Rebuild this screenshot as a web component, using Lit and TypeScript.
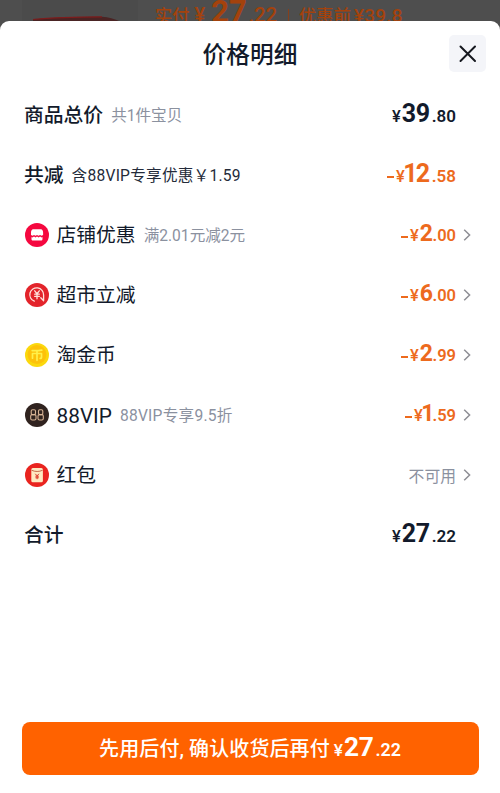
import {css, html, LitElement, nothing, svg, TemplateResult} from 'lit';
import {customElement, property} from 'lit/decorators.js';
import {classMap} from 'lit/directives/class-map.js';

interface Discount {
  icon: string;
  label: string;
  hint?: string;
  price?: string;
  status?: string;
}

const DISCOUNTS: Discount[] = [
  {icon: 'shop', label: '店铺优惠', hint: '满2.01元减2元', price: '2.00'},
  {icon: 'market', label: '超市立减', price: '6.00'},
  {icon: 'coin', label: '淘金币', price: '2.99'},
  {icon: 'vip', label: '88VIP', hint: '88VIP专享9.5折', price: '1.59'},
  {icon: 'packet', label: '红包', status: '不可用'},
];

const ICONS: Record<string, TemplateResult> = {
  shop: svg`
    <circle cx="12" cy="12" r="12" fill="#f5083f"/>
    <path d="M8 6.300h8c1.200 0 2.100 1.500 2.100 3.300v2.300l-1.500.8-1.500-.8-1.600.8-1.500-.8-1.500.8-1.500-.8-1.500.8-1.500-.8V9.600c0-1.800.9-3.300 2.100-3.300z" fill="#fff"/>
    <path d="M6.500 14.100l1 .3 1.500-.8 1.500.8 1.500-.8 1.600.8 1.500-.8 1.500.8.9-.3v1.800c0 1-.6 1.600-1.600 1.600H8.100c-1 0-1.600-.6-1.600-1.600z" fill="#fff"/>`,
  market: svg`
    <circle cx="12" cy="12" r="12" fill="#e3242b"/>
    <path d="M9.300 18.200A6.900 6.900 0 1 1 18.600 12v5.500M15.800 14.800l2.800 3" fill="none" stroke="#ffe3dc" stroke-width="1.300" stroke-linecap="round" stroke-linejoin="round"/>
    <path d="M9.700 7.800l2.300 2.900 2.300-2.900M12 10.800v5M9.700 11.200h4.600M9.700 13.400h4.600" fill="none" stroke="#ffe3dc" stroke-width="1.300" stroke-linecap="round"/>`,
  coin: svg`
    <circle cx="12" cy="12" r="12" fill="#fbd80d"/>
    <circle cx="12" cy="11.600" r="9.500" fill="#fdc20a"/>
    <path d="M7.200 7.600c3.300.2 6.500 0 9.600-.5M7.500 15.200v-4.700h9v4.100c0 .6-.4.900-1.300.8M12 7.500v9.800" fill="none" stroke="#fff04a" stroke-width="1.700" stroke-linecap="round" stroke-linejoin="round"/>`,
  vip: svg`
    <circle cx="12" cy="12" r="12" fill="#30231f"/>
    <g fill="none" stroke="#d9b596" stroke-width="1.100">
      <rect x="6.200" y="6.800" width="4.300" height="4.800" rx="1.300"/>
      <rect x="5.700" y="11.600" width="5.300" height="5.400" rx="1.500"/>
      <rect x="13.500" y="6.800" width="4.300" height="4.800" rx="1.300"/>
      <rect x="13" y="11.600" width="5.300" height="5.400" rx="1.500"/>
    </g>`,
  packet: svg`
    <circle cx="12" cy="12" r="12" fill="#e9241f"/>
    <rect x="6.300" y="4.900" width="11.600" height="14.300" rx="1.500" fill="#ffe9c2"/>
    <path d="M6.500 7.200c3.500 1.700 7.700 1.700 11.200 0" fill="none" stroke="#c66a4c" stroke-width="1"/>
    <path d="M10.300 10.800l1.800 2.100 1.800-2.100M12.100 12.800v3.400M10.400 13.200h3.400M10.400 14.800h3.400" fill="none" stroke="#dc3a2c" stroke-width="1"/>`,
};

@customElement('price-tag')
export class PriceTag extends LitElement {
  static override styles = css`
    :host {
      display: inline-flex;
      font-family: Roboto, "Noto Sans CJK SC", sans-serif;
      font-weight: 700;
      line-height: 30px;
      white-space: nowrap;
    }

    .tag {
      display: flex;
      align-items: baseline;
    }

    .minus {
      width: 7px;
      height: 2px;
      margin-right: 2px;
      background: currentColor;
      align-self: center;
      transform: translateY(2px);
    }

    .yen {
      font-size: 16.5px;
      font-weight: 500;
      margin-right: 1px;
    }

    .whole {
      font-size: 25px;
      letter-spacing: -0.4px;
    }

    /* the digit one is set tighter than the other figures */
    .one {
      margin: 0 -1.5px 0 -2.5px;
    }

    .cents {
      font-size: 17px;
      font-weight: 600;
      margin-left: 2px;
    }

    .small .whole {
      font-size: 23px;
    }

    .small .cents {
      font-size: 16.5px;
      margin-left: 0;
    }
  `;

  @property() value = '';
  @property({type: Boolean}) negative = false;
  @property({type: Boolean}) small = false;

  override render() {
    const [whole, cents] = this.value.split('.');
    return html`
      <div class=${classMap({tag: true, small: this.small})}>
        ${this.negative ? html`<span class="minus"></span>` : nothing}
        <span class="yen">¥</span>
        <span class="whole">${[...whole].map(d => html`<span class=${classMap({one: d === '1'})}>${d}</span>`)}</span>
        <span class="cents">.${cents}</span>
      </div>
    `;
  }
}

@customElement('app-root')
export class AppRoot extends LitElement {
  static override styles = css`
    :host {
      display: flex;
      flex-direction: column;
      height: 793px;
      overflow: hidden;
      background: #4e4e4e;
      color: #121a2b;
      font-family: Roboto, "Noto Sans CJK SC", sans-serif;
    }

    .backdrop {
      display: flex;
      height: 21px;
      flex: none;
      color: #a4420c;
    }

    .thumb {
      width: 116px;
      height: 21px;
      margin-left: 22px;
      background: #4b4b4b;
    }

    .paid {
      display: flex;
      align-items: baseline;
      height: 34px;
      margin: -5px 0 0 17px;
      font-size: 17.3px;
      font-weight: 500;
      line-height: 34px;
      white-space: nowrap;
    }

    .paid-whole {
      font-size: 31px;
      font-weight: 700;
      margin-left: 6px;
    }

    .paid-cents {
      font-size: 20px;
      margin-left: 2px;
    }

    .paid-yen {
      font-size: 20px;
      margin-left: 5px;
    }

    .bar {
      width: 1px;
      height: 13px;
      margin: 0 10px 0 11px;
      background: #84401d;
    }

    .before-price {
      margin-left: 3px;
      font-size: 19px;
      letter-spacing: 0.2px;
    }

    .sheet {
      display: flex;
      flex-direction: column;
      flex: 1;
      background: #fff;
      border-radius: 9px 9px 0 0;
      z-index: 1;
    }

    .header {
      display: grid;
      grid-template-columns: 1fr auto 1fr;
      align-items: center;
      height: 64px;
      padding: 0 14px;
    }

    .title {
      grid-column: 2;
      padding-top: 3px;
      font-size: 23.7px;
      font-weight: 500;
      line-height: 32px;
    }

    .close {
      justify-self: end;
      width: 37px;
      height: 37px;
      border: 0;
      padding: 0;
      border-radius: 5px;
      background: #f4f5f9;
    }

    .close svg {
      display: block;
    }

    .row {
      display: flex;
      align-items: center;
      height: 60px;
      padding: 0 44px 0 24px;
    }

    .row.linked {
      padding-right: 28px;
    }

    .icon {
      width: 24px;
      height: 24px;
      margin: 0 8px 1px 0.5px;
      flex: none;
    }

    .text {
      display: flex;
      align-items: center;
      flex: 1;
      line-height: 30px;
      padding-top: 2px;
      white-space: nowrap;
    }

    .label {
      font-size: 19.8px;
    }

    .label.strong {
      font-weight: 500;
    }

    .label.latin {
      font-size: 20.8px;
    }

    .hint {
      margin-left: 8px;
      font-size: 15.6px;
      color: #8b919f;
    }

    .hint.latin {
      letter-spacing: 0.25px;
    }

    .hint.dark {
      color: #242b3a;
      letter-spacing: 0.25px;
    }

    .orange {
      color: #ed6a1d;
    }

    .status {
      font-size: 15.8px;
      color: #8b919f;
    }

    .chevron {
      width: 8px;
      height: 14px;
      margin: 0 1px 0 7px;
      flex: none;
    }

    .pay {
      display: flex;
      align-items: center;
      justify-content: center;
      height: 53px;
      margin: auto 21.5px 18.5px;
      border: 0;
      border-radius: 8px;
      background: #ff6200;
      color: #fff;
      font-family: inherit;
    }

    .pay-content {
      display: flex;
      align-items: baseline;
      gap: 4px;
      padding-top: 2px;
    }

    .pay-text {
      font-size: 20px;
      font-weight: 500;
      letter-spacing: 0.1px;
      white-space: nowrap;
    }

    .pay-price {
      zoom: 1.05;
    }
  `;

  private renderDiscount(item: Discount) {
    const latin = item.icon === 'vip';
    return html`
      <div class="row linked">
        <svg class="icon" viewBox="0 0 24 24">${ICONS[item.icon]}</svg>
        <div class="text">
          <span class=${classMap({label: true, latin})}>${item.label}</span>
          ${item.hint ? html`<span class=${classMap({hint: true, latin})}>${item.hint}</span>` : nothing}
        </div>
        ${item.price
          ? html`<price-tag class="orange" value=${item.price} negative small></price-tag>`
          : html`<span class="status">${item.status}</span>`}
        <svg class="chevron" viewBox="0 0 8 14">
          <path d="M1.200 1.800 6.600 7l-5.400 5.200" fill="none" stroke="#8e8e94" stroke-width="1.500"/>
        </svg>
      </div>
    `;
  }

  override render() {
    return html`
      <div class="backdrop">
        <svg class="thumb" viewBox="0 0 116 21">
          <path d="M11 21v-1.500C32 17.500 57 17 80 16.800c7 .6 12 2 17 4.200z" fill="#4a2424"/>
          <path d="M11 19.500C32 17.600 57 17 80 16.900" fill="none" stroke="#7d1c1c" stroke-width="1.200"/>
        </svg>
        <div class="paid">
          <span>实付</span>
          <span class="paid-yen">¥</span>
          <span class="paid-whole">27</span>
          <span class="paid-cents">.22</span>
          <span class="bar"></span>
          <span>优惠前</span>
          <span class="before-price">¥39.8</span>
        </div>
      </div>
      <div class="sheet">
        <div class="header">
          <span class="title">价格明细</span>
          <button class="close" aria-label="关闭">
            <svg width="37" height="37" viewBox="0 0 37 37">
              <path d="M11.500 11.500l14.500 14.500M26 11.500 11.500 26" stroke="#15181f" stroke-width="2" stroke-linecap="round"/>
            </svg>
          </button>
        </div>
        <div class="row">
          <div class="text">
            <span class="label strong">商品总价</span>
            <span class="hint">共1件宝贝</span>
          </div>
          <price-tag value="39.80"></price-tag>
        </div>
        <div class="row">
          <div class="text">
            <span class="label strong">共减</span>
            <span class="hint dark">含88VIP专享优惠￥1.59</span>
          </div>
          <price-tag class="orange" value="12.58" negative></price-tag>
        </div>
        ${DISCOUNTS.map(item => this.renderDiscount(item))}
        <div class="row">
          <div class="text"><span class="label strong">合计</span></div>
          <price-tag value="27.22"></price-tag>
        </div>
        <button class="pay">
          <span class="pay-content">
            <span class="pay-text">先用后付, 确认收货后再付</span>
            <price-tag class="pay-price" value="27.22"></price-tag>
          </span>
        </button>
      </div>
    `;
  }
}

declare global {
  interface HTMLElementTagNameMap {
    'price-tag': PriceTag;
    'app-root': AppRoot;
  }
}
